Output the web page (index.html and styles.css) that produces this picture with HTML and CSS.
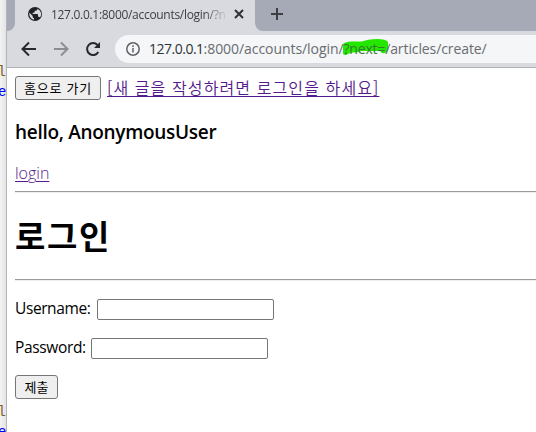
FILE: index.html
```html
<!DOCTYPE html>
<html lang="ko">
<head>
<meta charset="utf-8">
<title>로그인</title>
<link rel="stylesheet" href="styles.css">
</head>
<body>
<div class="desktop">
  <aside class="editor">
    <span class="code-brown">l</span><span class="code-blue">e</span>
    <span class="code-brown code-second">l</span><span class="code-blue">e</span>
  </aside>
  <div class="window">
    <header class="tabstrip">
      <div class="strip-left"></div>
      <div class="tab">
        <svg class="globe" viewBox="0 0 24 24"><circle cx="12" cy="12" r="10.500" fill="#202124"/><path fill="#d8dae0" d="M15.500 4.200v.8c0 1.200-.9 2-2 2h-2v2c0 .6-.5 1-1 1h-2v2h7c.6 0 1 .5 1 1v3h1c.9 0 1.700.6 1.900 1.400A8.500 8.500 0 0 0 15.500 4.200zM10.500 20.500v-2.500c-1.100 0-2-.9-2-2v-1L3.700 10.200A8.500 8.500 0 0 0 10.500 20.500z"/></svg>
        <span class="tab-title">127.0.0.1:8000/accounts/login/?n</span>
        <svg class="close" viewBox="0 0 10 10"><path d="M1 1l8 8M9 1L1 9"/></svg>
      </div>
      <div class="strip-right"><svg class="plus" viewBox="0 0 12 12"><path d="M6 0v12M0 6h12"/></svg></div>
    </header>
    <nav class="toolbar">
      <svg class="nav-icon" viewBox="0 0 16 16"><path d="M15 8H2M8 1.500L1.500 8 8 14.500"/></svg>
      <svg class="nav-icon forward" viewBox="0 0 16 16"><path d="M1 8h13M8 1.500L14.500 8 8 14.500"/></svg>
      <svg class="nav-icon reload" viewBox="0 0 16 16"><path d="M13.300 11A6 6 0 1 1 12.500 4"/><path class="solid" d="M15 1v6H9z"/></svg>
      <div class="address">
        <svg class="info" viewBox="0 0 14 14"><circle cx="7" cy="7" r="6.200"/><path d="M7 6v4.500M7 3.300v1.600"/></svg>
        <div class="url"><span class="host">127.0.0.1</span><span class="path">:8000/accounts/login/</span><span class="query"><svg class="marker" viewBox="0 0 46 18"><path d="M0 5Q3 2 10 2.500L19 2.500Q25 0 34 0Q43 0 45 3V11Q43 15 39 14L37 12H18Q14 14 8 13.500L4 15.500Q0 17 0 14Z"/></svg><span class="query-text">?next=</span></span>/articles/create/</div>
      </div>
    </nav>
    <main class="page">
      <div class="top-row"><button class="home">홈으로 가기</button><a class="write" href="#">[새 글을 작성하려면 로그인을 하세요]</a></div>
      <h3>hello, AnonymousUser</h3>
      <a class="login" href="#">login</a>
      <hr>
      <h1>로그인</h1>
      <hr>
      <form>
        <div class="field"><label class="user-label" for="username">Username:</label><input id="username" type="text"></div>
        <div class="field"><label class="pass-label" for="password">Password:</label><input id="password" type="password"></div>
        <button class="submit" type="button">제출</button>
      </form>
    </main>
  </div>
</div>
</body>
</html>
```
FILE: styles.css
```css
* { box-sizing: border-box; }
body { margin: 0; overflow: hidden; font-family: "Open Sans", "Noto Sans CJK KR", sans-serif; color: #000; }
.desktop { display: flex; width: 536px; height: 432px; overflow: hidden; }
.editor { width: 6px; flex: none; padding-top: 62px; background: linear-gradient(90deg, #f3f3f3, #e4e4e4); font: 14px/20px "Liberation Mono", monospace; }
.editor span { display: block; width: 6px; height: 20px; text-indent: -2px; }
.editor .code-brown { text-indent: -2.5px; }
.editor .code-brown { color: #795e26; }
.editor .code-blue { color: #0000ff; }
.editor .code-second { margin-top: 300px; }
.window { flex: 1; min-width: 0; border-left: 1px solid #b4b4b4; background: #fff; }
.tabstrip { display: flex; height: 31px; background: #d8dae0; }
.strip-left { width: 8px; background: #a6aab7; border-bottom-right-radius: 8px; }
.tab { display: flex; align-items: center; width: 240px; height: 28px; padding-left: 12px; }
.globe { width: 16px; height: 16px; flex: none; }
.tab-title { width: 177px; margin-left: 8px; overflow: hidden; white-space: nowrap; font-size: 12px; letter-spacing: -0.3px; color: #3c4043; -webkit-mask-image: linear-gradient(90deg, #000 153px, transparent 177px); mask-image: linear-gradient(90deg, #000 153px, transparent 177px); }
.close { width: 10px; height: 10px; margin-left: 6px; }
.close path { fill: none; stroke: #303236; stroke-width: 2; }
.strip-right { flex: 1; padding: 8px 0 0 16px; background: #a6aab7; border-bottom-left-radius: 8px; }
.plus { display: block; width: 12px; height: 12px; }
.plus path { stroke: #3c3e43; stroke-width: 2; }
.toolbar { display: flex; align-items: center; height: 37px; padding-left: 14px; background: #d8dae0; border-bottom: 1px solid #adafb3; }
.nav-icon { flex: none; width: 16px; height: 16px; margin-right: 16px; }
.nav-icon path { fill: none; stroke: #26282b; stroke-width: 2; }
.forward path { stroke: #8b8d92; }
.nav-icon .solid { fill: #26282b; stroke: none; }
.reload { margin-right: 14px; }
.address { display: flex; align-items: center; flex: 1; height: 28px; padding-left: 11px; border-radius: 14px 0 0 14px; background: #f4f6f8; }
.info { width: 14px; height: 14px; flex: none; }
.info circle, .info path { fill: none; stroke: #5f6368; stroke-width: 1.500; }
.url { isolation: isolate; margin-left: 9px; white-space: nowrap; font-size: 14px; line-height: 20px; letter-spacing: -0.1px; color: #696c70; }
.host { color: #303236; letter-spacing: -0.5px; }
.path { letter-spacing: -0.06px; }
.query { position: relative; display: inline-block; letter-spacing: -0.2px; }
.marker { position: absolute; z-index: -1; left: -1px; top: 0; width: 46px; height: 18px; }
.marker path { fill: #24e700; }
.query-text { color: #357d2c; }
.page { padding: 8px; font-size: 16px; }
.top-row { display: flex; height: 24px; }
button { padding: 0; height: 24px; border: 1px solid #767676; border-radius: 3px; background: #efefef; color: #000; font: 13px/20px "Noto Sans CJK KR", sans-serif; white-space: nowrap; }
.home { width: 86px; letter-spacing: 0.8px; }
.write { margin-left: 6px; line-height: 23px; white-space: nowrap; letter-spacing: 1.1px; }
.write, .login { color: #551a8b; text-underline-offset: 2px; text-decoration-thickness: 1px; }
.write { font-family: "Noto Sans CJK KR", sans-serif; font-weight: 350; }
h3 { margin: 19px 0 0; height: 26px; font-size: 19px; line-height: 26px; font-weight: 600; letter-spacing: -0.3px; white-space: nowrap; }
.login { display: block; width: max-content; margin-top: 17px; height: 24px; line-height: 23px; font-weight: 350; }
hr { height: 2px; margin: 5px -8px 0 0; border: 0; border-top: 1px solid #9a9a9a; border-bottom: 1px solid #eee; }
h1 { height: 44px; margin: 21px 0; font: 700 33px/43px "Noto Sans CJK KR", sans-serif; letter-spacing: 1.7px; }
h1 + hr { margin-top: 20px; }
form { margin-top: 18px; }
.field { display: flex; height: 21px; align-items: center; margin-bottom: 18px; }
label { flex: none; font-size: 15.5px; line-height: 19px; padding-bottom: 2px; white-space: nowrap; letter-spacing: -0.4px; }
.pass-label { width: 76px; letter-spacing: -0.35px; }
.user-label { width: 82px; }
input { width: 177px; height: 21px; border: 1px solid #767676; border-radius: 2px; background: #fff; }
.submit { display: block; width: 43px; margin-top: -2px; }
```
